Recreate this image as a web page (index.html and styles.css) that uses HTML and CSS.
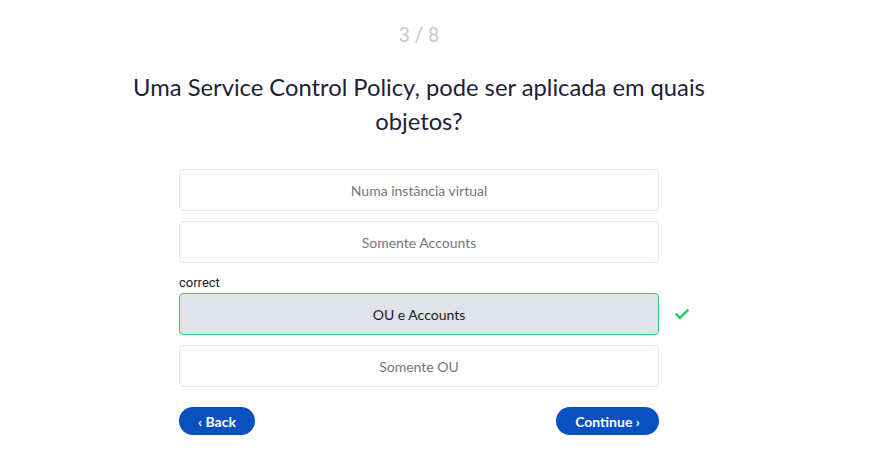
FILE: index.html
```html
<!DOCTYPE html>
<html lang="pt">
<head>
<meta charset="utf-8">
<title>Quiz</title>
<link rel="stylesheet" href="styles.css">
</head>
<body>
<main class="quiz">
  <div class="progress">3 / 8</div>
  <h1 class="question">Uma Service Control Policy, pode ser aplicada em quais objetos?</h1>
  <div class="options">
    <div class="option-row"><button class="option">Numa instância virtual</button></div>
    <div class="option-row"><button class="option">Somente Accounts</button></div>
    <div class="option-wrap">
      <div class="label">correct</div>
      <div class="option-row">
        <button class="option selected">OU e Accounts</button>
        <svg class="check" width="14" height="11" viewBox="0 0 14 11" aria-hidden="true"><path d="M1.5 5.5 L5 9 L12.5 1.5" fill="none" stroke="#2ecc71" stroke-width="2.6" stroke-linecap="square"/></svg>
      </div>
    </div>
    <div class="option-row"><button class="option">Somente OU</button></div>
  </div>
  <div class="nav">
    <button class="nav-btn back">‹ Back</button>
    <button class="nav-btn next">Continue ›</button>
  </div>
</main>
</body>
</html>
```

FILE: styles.css
```css
html, body {
  margin: 0;
  padding: 0;
  background: #ffffff;
}
body {
  font-family: Lato, "Noto Sans", sans-serif;
}
.quiz {
  width: 838px;
  display: flex;
  flex-direction: column;
  align-items: center;
}
.progress {
  margin-top: 22px;
  font-family: Roboto, "Noto Sans", sans-serif;
  font-size: 20px;
  line-height: 26px;
  color: #c9c9c9;
}
.question {
  margin: 22px 0 0;
  width: 600px;
  text-align: center;
  font-weight: 400;
  font-size: 23.75px;
  line-height: 34px;
  color: #1f2137;
}
.options {
  margin-top: 31px;
  width: 480px;
  display: flex;
  flex-direction: column;
  gap: 10px;
}
.option-row {
  position: relative;
  display: flex;
}
.option {
  width: 480px;
  height: 42px;
  box-sizing: border-box;
  border: 1px solid #e8e8ea;
  border-radius: 4px;
  background: #ffffff;
  font-family: Lato, sans-serif;
  font-size: 14px;
  color: #777777;
  cursor: pointer;
}
.option.selected {
  background: #e2e3e8;
  border-color: #2ecc71;
  color: #1a1a1a;
}
.label {
  font-family: Roboto, sans-serif;
  font-size: 13px;
  line-height: 20px;
  color: #222222;
}
.check {
  position: absolute;
  left: 496px;
  top: 16px;
}
.nav {
  margin-top: 20px;
  width: 480px;
  display: flex;
  justify-content: space-between;
}
.nav-btn {
  height: 28px;
  border: none;
  border-radius: 14px;
  background: #0b50c0;
  color: #ffffff;
  font-family: Lato, sans-serif;
  font-weight: 700;
  font-size: 14px;
  padding: 0;
  cursor: pointer;
}
.back { width: 76px; }
.next { width: 103px; }
```
